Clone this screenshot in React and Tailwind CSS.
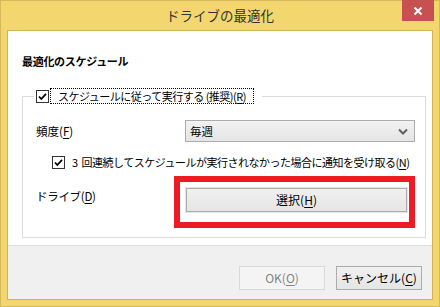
import React from "react";

function Check() {
  return (
    <span className="flex h-[13px] w-[13px] shrink-0 items-center justify-center border border-[#333333] bg-white">
      <svg width="11" height="11" viewBox="0 0 11 11">
        <path d="M2 5.5 L4.3 8 L9 2.8" fill="none" stroke="#000" strokeWidth="1.8" />
      </svg>
    </span>
  );
}

function U({ children }) {
  return <span className="underline underline-offset-2">{children}</span>;
}

export default function App() {
  return (
    <div className="flex h-[307px] w-[440px] flex-col border border-[#d6b95c] bg-[#f4d66f] px-[6px] pb-[6px] font-['Noto_Sans_CJK_JP','Noto_Sans',sans-serif] text-black">
      {/* title bar */}
      <div className="relative flex h-[29px] shrink-0 items-center justify-center">
        <span className="text-[13.5px] leading-none text-[#333333]">ドライブの最適化</span>
        <div className="absolute right-[-1px] top-[-1px] flex h-[21px] w-[32px] items-center justify-center bg-[#c75050]">
          <svg width="10" height="10" viewBox="0 0 10 10">
            <path d="M1.5 1.5 L8.5 8.5 M8.5 1.5 L1.5 8.5" stroke="#fff" strokeWidth="2" />
          </svg>
        </div>
      </div>

      {/* client */}
      <div className="flex flex-1 flex-col border border-[#d2b456]">
        <div className="flex h-[214px] flex-col bg-white pl-[14px] pr-[11px]">
          <div className="mt-[22px] text-[11px] font-bold leading-[16px] tracking-[-0.3px]">最適化のスケジュール</div>

          <fieldset className="mt-[19px] border border-[#dcdcdc] pb-[9px] pl-[13px] pr-[10px]">
            <legend className="-ml-[2px] flex items-center pl-[2px] pr-[8px]">
              <Check />
              <span className="ml-[1px] border border-dotted border-black px-[7px] text-[11px] leading-[14px] tracking-[-0.5px]">
                スケジュールに従って実行する (推奨)(<U>R</U>)
              </span>
            </legend>

            <div className="mt-[16px] flex h-[22px] items-center">
              <span className="w-[149px] text-[11.5px] leading-[16px]">
                頻度(<U>F</U>)
              </span>
              <div className="flex h-[22px] flex-1 items-center justify-between border border-[#acacac] bg-gradient-to-b from-[#f2f2f2] to-[#e5e5e5] pl-[4px] pr-[6px]">
                <span className="text-[11.5px] leading-[16px]">毎週</span>
                <svg width="10" height="7" viewBox="0 0 10 7">
                  <path d="M1 1.5 L5 5.5 L9 1.5" fill="none" stroke="#606060" strokeWidth="2" />
                </svg>
              </div>
            </div>

            <div className="ml-[16px] mt-[12px] flex h-[16px] items-center">
              <Check />
              <span className="ml-[7px] text-[11px] leading-[16px] tracking-[-0.5px]">
                3<span className="ml-[4px]">回連続してスケジュールが実行されなかった場合に通知を受け取る(<U>N</U>)</span>
              </span>
            </div>

            <div className="mt-[6px] flex items-start">
              <span className="mt-[12px] w-[138px] shrink-0 text-[11.5px] leading-[16px] tracking-[-0.3px]">
                ドライブ(<U>D</U>)
              </span>
              <div className="h-[52px] w-[241px] shrink-0 border-[6px] border-[#ed1c24] bg-white pl-[5px] pr-[1px] pt-[5px]">
                <div className="flex h-[26px] items-center justify-center border border-[#e5e5e5]">
                  <div className="flex h-[24px] w-full items-center justify-center border border-[#acacac] bg-gradient-to-b from-[#f0f0f0] to-[#e5e5e5] text-[12px]">
                    選択(<U>H</U>)
                  </div>
                </div>
              </div>
            </div>
          </fieldset>
        </div>

        <div className="flex flex-1 items-start justify-end gap-[11px] border-t border-[#dfdfdf] bg-[#f0f0f0] pr-[10px] pt-[20px]">
          <div className="flex h-[24px] w-[86px] items-center justify-center border border-[#d9d9d9] bg-[#f4f4f4] text-[12px] text-[#838383]">
            OK(<U>O</U>)
          </div>
          <div className="flex h-[24px] w-[86px] items-center justify-center border border-[#acacac] bg-gradient-to-b from-[#f0f0f0] to-[#e5e5e5] text-[12px]">
            キャンセル(<U>C</U>)
          </div>
        </div>
      </div>
    </div>
  );
}
